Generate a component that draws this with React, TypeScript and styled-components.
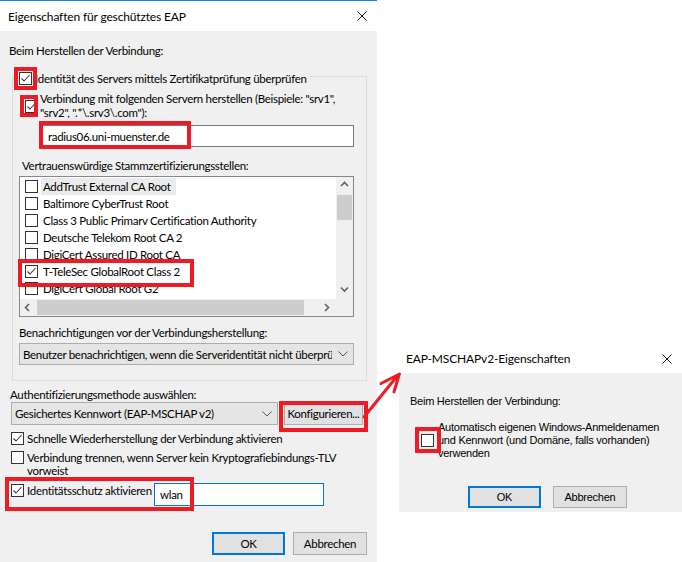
import React from "react";
import styled, { createGlobalStyle } from "styled-components";

const SEGOE = `Lato, "Noto Sans", "DejaVu Sans", sans-serif`;
const MSSANS = `"Liberation Sans", Arial, sans-serif`;
const RED = "#ed1c24";

const GlobalStyle = createGlobalStyle`
  html, body { margin: 0; padding: 0; background: #ffffff; }
  #root { width: 682px; height: 562px; overflow: hidden; }
`;

const Canvas = styled.div`
  position: relative;
  display: flex;
  align-items: flex-start;
  width: 682px;
  height: 562px;
  overflow: hidden;
  background: #ffffff;
  color: #000;
`;

// ---------- windows ----------
const MainWindow = styled.div`
  box-sizing: border-box;
  flex: none;
  display: flex;
  flex-direction: column;
  width: 377px;
  height: 562px;
  border-top: 1px solid #1883d7;
  background: #f0f0f0;
  font-family: ${SEGOE};
  font-size: 11.5px;
  letter-spacing: -0.3px;
`;

const SubWindow = styled.div`
  flex: none;
  display: flex;
  flex-direction: column;
  width: 283px;
  margin: 341px 0 0 22px;
  font-family: ${MSSANS};
  font-size: 11px;
  letter-spacing: -0.25px;
`;

const TitleBar = styled.div<{ $h: number; $pl: number; $pt?: number }>`
  box-sizing: border-box;
  flex: none;
  display: flex;
  align-items: center;
  justify-content: space-between;
  height: ${(p) => p.$h}px;
  padding: ${(p) => p.$pt ?? 0}px 10px 0 ${(p) => p.$pl}px;
  background: #ffffff;
  font-family: ${SEGOE};
  font-size: 12px;
  letter-spacing: -0.15px;
  white-space: nowrap;
`;

const MainBody = styled.div`
  flex: 1;
  display: flex;
  flex-direction: column;
  padding: 12px 0 0 9px;
`;

const SubBody = styled.div`
  box-sizing: border-box;
  height: 139px;
  display: flex;
  flex-direction: column;
  padding: 22px 0 0 11px;
  background: #f0f0f0;
`;

// ---------- generic parts ----------
const Text = styled.div<{ $ml?: number; $mt?: number; $lh?: number; $w?: number }>`
  flex: none;
  margin: ${(p) => p.$mt ?? 0}px 0 0 ${(p) => p.$ml ?? 0}px;
  line-height: ${(p) => p.$lh ?? 15}px;
  white-space: nowrap;
  ${(p) => (p.$w ? `width: ${p.$w}px;` : "")}
`;

const Row = styled.div<{ $ml?: number; $mt?: number; $gap?: number; $align?: string }>`
  flex: none;
  display: flex;
  align-items: ${(p) => p.$align ?? "center"};
  gap: ${(p) => p.$gap ?? 3}px;
  margin: ${(p) => p.$mt ?? 0}px 0 0 ${(p) => p.$ml ?? 0}px;
`;

const Box = styled.span<{ $mt?: number }>`
  flex: none;
  box-sizing: border-box;
  display: flex;
  align-items: center;
  justify-content: center;
  width: 13px;
  height: 13px;
  margin-top: ${(p) => p.$mt ?? 0}px;
  border: 1px solid #333333;
  background: #ffffff;
`;

const Check = ({ on, mt }: { on?: boolean; mt?: number }) => (
  <Box $mt={mt}>
    {on && (
      <svg width="11" height="11" viewBox="0 0 11 11">
        <polyline points="1.5,5.5 4,8 9.5,2" fill="none" stroke="#3c3c3c" strokeWidth="1.1" />
      </svg>
    )}
  </Box>
);

const Close = () => (
  <svg width="10" height="10" viewBox="0 0 10 10">
    <path d="M0.5 0.5L9.5 9.5M9.5 0.5L0.5 9.5" stroke="#111" strokeWidth="1" />
  </svg>
);

const Chevron = ({ dir }: { dir: "up" | "down" | "left" | "right" }) => {
  const d = {
    up: "M1 5L4.5 1.5L8 5",
    down: "M1 1.5L4.5 5L8 1.5",
    left: "M5 1L1.5 4.5L5 8",
    right: "M2 1L5.5 4.5L2 8",
  }[dir];
  return (
    <svg width="9" height="9" viewBox="0 0 9 9">
      <path d={d} fill="none" stroke="#606060" strokeWidth="1.6" />
    </svg>
  );
};

const DropArrow = () => (
  <svg width="10" height="6" viewBox="0 0 10 6">
    <path d="M0.5 0.5L5 5L9.5 0.5" fill="none" stroke="#555" strokeWidth="1" />
  </svg>
);

const Field = styled.div<{ $w: number; $ml?: number; $mt?: number; $h?: number; $focus?: boolean; $pl?: number }>`
  flex: none;
  box-sizing: border-box;
  display: flex;
  align-items: center;
  width: ${(p) => p.$w}px;
  height: ${(p) => p.$h ?? 23}px;
  margin: ${(p) => p.$mt ?? 0}px 0 0 ${(p) => p.$ml ?? 0}px;
  padding-left: ${(p) => p.$pl ?? 7}px;
  border: 1px solid ${(p) => (p.$focus ? "#0078d7" : "#7a7a7a")};
  background: #ffffff;
  white-space: nowrap;
`;

const Combo = styled.div<{ $w: number; $ml?: number; $mt?: number; $h?: number }>`
  flex: none;
  box-sizing: border-box;
  display: flex;
  align-items: center;
  gap: 6px;
  width: ${(p) => p.$w}px;
  height: ${(p) => p.$h ?? 23}px;
  margin: ${(p) => p.$mt ?? 0}px 0 0 ${(p) => p.$ml ?? 0}px;
  padding: 0 5px 0 3px;
  border: 1px solid #adadad;
  background: #e5e5e5;
  white-space: nowrap;
`;

const ComboText = styled.span`
  flex: 1;
  overflow: hidden;
`;

const Button = styled.div<{ $w: number; $h?: number; $default?: boolean }>`
  flex: none;
  box-sizing: border-box;
  display: flex;
  align-items: center;
  justify-content: center;
  width: ${(p) => p.$w}px;
  height: ${(p) => p.$h ?? 23}px;
  border: ${(p) => (p.$default ? "2px solid #0078d7" : "1px solid #adadad")};
  background: #e1e1e1;
  white-space: nowrap;
`;

const ButtonRow = styled.div<{ $mt: number; $ml?: number; $end?: boolean; $gap: number }>`
  flex: none;
  display: flex;
  justify-content: ${(p) => (p.$end ? "flex-end" : "flex-start")};
  gap: ${(p) => p.$gap}px;
  margin: ${(p) => p.$mt}px 0 0 ${(p) => p.$ml ?? 0}px;
  padding-right: ${(p) => (p.$end ? 10 : 0)}px;
`;

// ---------- group box ----------
const Group = styled.div`
  flex: none;
  box-sizing: border-box;
  display: flex;
  flex-direction: column;
  width: 355px;
  height: 305px;
  margin: 18px 0 0 3px;
  border: 1px solid #dcdcdc;
`;

const Legend = styled.div`
  flex: none;
  display: flex;
  align-items: center;
  gap: 3px;
  width: fit-content;
  height: 15px;
  margin: -6px 0 0 6px;
  padding-right: 3px;
  background: #f0f0f0;
  white-space: nowrap;
`;

// ---------- certificate list ----------
const ListBox = styled.div`
  flex: none;
  box-sizing: border-box;
  display: grid;
  grid-template-columns: 1fr 17px;
  grid-template-rows: 1fr 17px;
  width: 335px;
  height: 141px;
  margin: 3px 0 0 6px;
  border: 1px solid #828790;
  background: #ffffff;
`;

const ListArea = styled.div`
  overflow: hidden;
  padding-top: 1px;
`;

const ListItem = styled.div`
  display: flex;
  align-items: center;
  height: 17px;
  padding-left: 5px;
  white-space: nowrap;
`;

const ItemLabel = styled.span<{ $focus?: boolean }>`
  margin-left: 3px;
  padding: 0 5px 0 2px;
  line-height: 17px;
  background: ${(p) => (p.$focus ? "#ebebeb" : "transparent")};
`;

const VScroll = styled.div`
  display: flex;
  flex-direction: column;
  align-items: center;
  background: #f0f0f0;
`;

const HScroll = styled.div`
  display: flex;
  align-items: center;
  background: #f0f0f0;
`;

const ArrowCell = styled.div`
  flex: none;
  display: flex;
  align-items: center;
  justify-content: center;
  width: 17px;
  height: 17px;
`;

const Thumb = styled.div<{ $w: number; $h: number; $mt?: number }>`
  flex: none;
  width: ${(p) => p.$w}px;
  height: ${(p) => p.$h}px;
  margin-top: ${(p) => p.$mt ?? 0}px;
  background: #cdcdcd;
`;

const Spacer = styled.div`
  flex: 1;
`;

const Corner = styled.div`
  background: #f0f0f0;
`;

// ---------- annotations ----------
const Mark = styled.div<{ $x: number; $y: number; $w: number; $h: number }>`
  position: absolute;
  box-sizing: border-box;
  left: ${(p) => p.$x}px;
  top: ${(p) => p.$y}px;
  width: ${(p) => p.$w}px;
  height: ${(p) => p.$h}px;
  border: 4px solid ${RED};
  pointer-events: none;
`;

const ArrowSvg = styled.svg`
  position: absolute;
  left: 355px;
  top: 365px;
  overflow: visible;
  pointer-events: none;
`;

const certs = [
  "AddTrust External CA Root",
  "Baltimore CyberTrust Root",
  "Class 3 Public Primarv Certification Authority",
  "Deutsche Telekom Root CA 2",
  "DigiCert Assured ID Root CA",
  "T-TeleSec GlobalRoot Class 2",
  "DigiCert Global Root G2",
];

const App = () => {
  return (
    <>
      <GlobalStyle />
      <Canvas>
        <MainWindow>
          <TitleBar $h={30} $pl={8}>
            <span>Eigenschaften für geschütztes EAP</span>
            <Close />
          </TitleBar>
          <MainBody>
            <Text>Beim Herstellen der Verbindung:</Text>

            <Group>
              <Legend>
                <Check on />
                <span>Identität des Servers mittels Zertifikatprüfung überprüfen</span>
              </Legend>

              <Row $ml={12} $mt={6} $gap={2}>
                <Check on />
                <Text $lh={14}>
                  Verbindung mit folgenden Servern herstellen (Beispiele: "srv1",
                  <br />
                  {'"srv2", ".*\\.srv3\\.com"):'}
                </Text>
              </Row>

              <Field $w={314} $h={22} $ml={27} $mt={5}>
                radius06.uni-muenster.de
              </Field>

              <Text $ml={9} $mt={11}>
                Vertrauenswürdige Stammzertifizierungsstellen:
              </Text>

              <ListBox>
                <ListArea>
                  {certs.map((c, i) => (
                    <ListItem key={c}>
                      <Check on={i === 5} />
                      <ItemLabel $focus={i === 0}>{c}</ItemLabel>
                    </ListItem>
                  ))}
                </ListArea>
                <VScroll>
                  <ArrowCell>
                    <Chevron dir="up" />
                  </ArrowCell>
                  <Thumb $w={15} $h={25} $mt={1} />
                  <Spacer />
                  <ArrowCell>
                    <Chevron dir="down" />
                  </ArrowCell>
                </VScroll>
                <HScroll>
                  <ArrowCell>
                    <Chevron dir="left" />
                  </ArrowCell>
                  <Thumb $w={267} $h={15} />
                  <Spacer />
                  <ArrowCell>
                    <Chevron dir="right" />
                  </ArrowCell>
                </HScroll>
                <Corner />
              </ListBox>

              <Text $ml={6} $mt={8}>
                Benachrichtigungen vor der Verbindungsherstellung:
              </Text>
              <Combo $w={335} $h={22} $ml={6} $mt={3}>
                <ComboText>Benutzer benachrichtigen, wenn die Serveridentität nicht überprüft werden kann</ComboText>
                <DropArrow />
              </Combo>
            </Group>

            <Text $ml={1} $mt={6}>
              Authentifizierungsmethode auswählen:
            </Text>
            <Row $ml={2} $mt={0} $gap={6}>
              <Combo $w={267}>
                <ComboText>Gesichertes Kennwort (EAP-MSCHAP v2)</ComboText>
                <DropArrow />
              </Combo>
              <Button $w={79}>Konfigurieren...</Button>
            </Row>

            <Row $ml={2} $mt={6}>
              <Check on />
              <Text>Schnelle Wiederherstellung der Verbindung aktivieren</Text>
            </Row>

            <Row $ml={2} $mt={5} $align="flex-start">
              <Check />
              <Text $lh={13}>
                Verbindung trennen, wenn Server kein Kryptografiebindungs-TLV
                <br />
                vorweist
              </Text>
            </Row>

            <Row $ml={2} $mt={6} $align="flex-start">
              <Check on mt={1} />
              <Text $w={124}>Identitätsschutz aktivieren</Text>
              <Field $w={170} $focus $pl={5}>
                wlan
              </Field>
            </Row>

            <ButtonRow $mt={26} $end $gap={8}>
              <Button $w={73} $default>
                OK
              </Button>
              <Button $w={74}>Abbrechen</Button>
            </ButtonRow>
          </MainBody>
        </MainWindow>

        <SubWindow>
          <TitleBar $h={32} $pl={7} $pt={3}>
            <span>EAP-MSCHAPv2-Eigenschaften</span>
            <Close />
          </TitleBar>
          <SubBody>
            <Text $lh={13}>Beim Herstellen der Verbindung:</Text>
            <Row $ml={11} $mt={13} $gap={4}>
              <Check />
              <Text $lh={13}>
                Automatisch eigenen Windows-Anmeldenamen
                <br />
                und Kennwort (und Domäne, falls vorhanden)
                <br />
                verwenden
              </Text>
            </Row>
            <ButtonRow $mt={26} $ml={58} $gap={12}>
              <Button $w={73} $h={22} $default>
                OK
              </Button>
              <Button $w={74} $h={22}>
                Abbrechen
              </Button>
            </ButtonRow>
          </SubBody>
        </SubWindow>

        <Mark $x={14} $y={67} $w={23} $h={23} />
        <Mark $x={20} $y={95} $w={18} $h={22} />
        <Mark $x={39} $y={121} $w={152} $h={28} />
        <Mark $x={18} $y={259} $w={176} $h={28} />
        <Mark $x={279} $y={401} $w={89} $h={31} />
        <Mark $x={5} $y={477} $w={189} $h={34} />
        <Mark $x={415} $y={427} $w={26} $h={26} />

        <ArrowSvg width="50" height="60" viewBox="0 0 50 60">
          <path
            d="M9 52L43 10M44.5 9L26 18.5M44 10L39 27"
            fill="none"
            stroke={RED}
            strokeWidth="3"
            strokeLinecap="round"
          />
        </ArrowSvg>
      </Canvas>
    </>
  );
};

export default App;
